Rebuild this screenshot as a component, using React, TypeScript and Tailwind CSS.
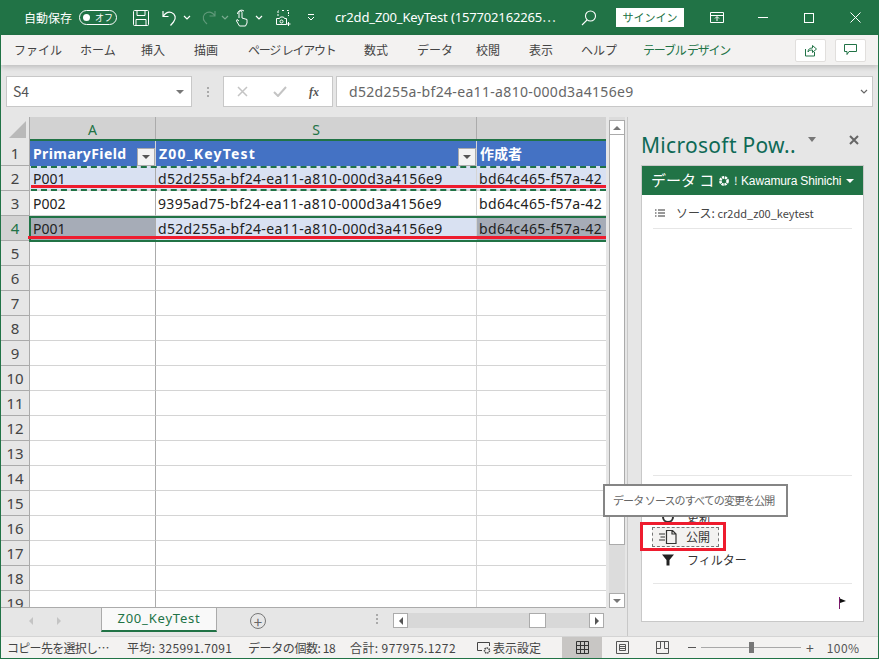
import type { ReactNode } from 'react';

const GUID = 'd52d255a-bf24-ea11-a810-000d3a4156e9';
const CREATOR = 'bd64c465-f57a-42';
const RULE_ROWS = [5, 6, 7, 8, 9, 10, 11, 12, 13, 14, 15, 16, 17, 18, 19];

const menus = [
  { label: 'ファイル', w: 'w-[79px] pl-[13px]' },
  { label: 'ホーム', w: 'w-[61px]' },
  { label: '挿入', w: 'w-[53px]' },
  { label: '描画', w: 'w-[54px]' },
  { label: 'ページ レイアウト', w: 'w-[116px] tracking-[-1.2px]' },
  { label: '数式', w: 'w-[53px]' },
  { label: 'データ', w: 'w-[59px]' },
  { label: '校閲', w: 'w-[53px]' },
  { label: '表示', w: 'w-[52px]' },
  { label: 'ヘルプ', w: 'w-[62px]' },
];

function Chevron({ className = '' }: { className?: string }) {
  return (
    <svg className={className} width="8" height="5" viewBox="0 0 8 5" fill="none" stroke="currentColor" strokeWidth="1.2">
      <path d="M1 1l3 3 3-3" />
    </svg>
  );
}

function TitleBar() {
  return (
    <div className="h-[35px] shrink-0 bg-[#217346] text-white flex items-center text-[12px]">
      <span className="ml-[23px] w-[55px]">自動保存</span>
      <div className="w-[38px] h-[15px] rounded-full border border-white flex items-center justify-between px-[3px]">
        <span className="w-[7px] h-[7px] rounded-full bg-white" />
        <span className="text-[9px] leading-none">オフ</span>
      </div>
      <svg className="ml-[15px]" width="18" height="18" viewBox="0 0 18 18" fill="none" stroke="white" strokeWidth="1">
        <path d="M2.5 1.5h13a1 1 0 0 1 1 1v13a1 1 0 0 1-1 1h-13a1 1 0 0 1-1-1v-13a1 1 0 0 1 1-1zM5 1.5v5h8v-5M4 16.5v-6h10v6" />
      </svg>
      <svg className="ml-[12px]" width="16" height="18" viewBox="0 0 16 18" fill="none" stroke="white" strokeWidth="1.2">
        <path d="M1 2v5.5h5.500M1.500 7c2-3 5-4.500 8-3.500 4 1.500 5 6 2 9.500l-3 3.500" />
      </svg>
      <Chevron className="ml-[5px]" />
      <svg className="ml-[9px] opacity-40" width="16" height="17" viewBox="0 0 16 17" fill="none" stroke="#bcd2c6" strokeWidth="1.1">
        <path d="M15 2v5H9.5M15 7c-2-3-5-4.5-8-3.5-4 1.5-5 6-2 9.500l2 2" />
      </svg>
      <Chevron className="ml-[5px] opacity-40" />
      <svg className="ml-[6px]" width="14" height="18" viewBox="0 0 14 18" fill="none" stroke="white" strokeWidth="1">
        <path d="M4 9V3.5a1.5 1.5 0 0 1 3 0V9l5 1.5V14l-1.5 3h-6L1.5 12 2 10.5l2 1.500" />
        <path d="M2.5 5a4 4 0 0 1 6.500-3" />
      </svg>
      <Chevron className="ml-[6px]" />
      <svg className="ml-[12px]" width="16" height="18" viewBox="0 0 16 18" fill="none" stroke="white" strokeWidth="1">
        <path d="M3 7V1.500h1M7 1.500h2M12 1.500h1.500V7" strokeDasharray="2 1" />
        <path d="M1.500 9.500h3l1-1.500h3l1 1.500h2v6h-10zM13.500 13v4M11.500 15h4" />
        <circle cx="6.500" cy="12.500" r="1.500" />
      </svg>
      <svg className="ml-[16px]" width="8" height="7" viewBox="0 0 8 7" fill="none" stroke="white" strokeWidth="1">
        <path d="M1 .5h6M1 3l3 3 3-3" />
      </svg>
      <span className="ml-[20px] w-[222px] text-[13px] tracking-[-0.15px] font-['Noto_Sans','Noto_Sans_CJK_JP',sans-serif] whitespace-nowrap">
        cr2dd_Z00_KeyTest (157702162265⋯
      </span>
      <svg className="ml-[24px]" width="16" height="16" viewBox="0 0 16 16" fill="none" stroke="white" strokeWidth="1.1">
        <circle cx="9.5" cy="6" r="5" />
        <path d="M6 10l-5 5" />
      </svg>
      <div className="ml-[19px] w-[68px] h-[19px] bg-white text-[#217346] text-[11px] flex items-center justify-center">サインイン</div>
      <svg className="ml-[26px]" width="14" height="12" viewBox="0 0 14 12" fill="none" stroke="white" strokeWidth="1">
        <path d="M.5.5h13v10h-13zM.5 3.5h13M7 9V5M5 6.5l2-2 2 2" />
      </svg>
      <span className="ml-[34px] w-[10px] h-px bg-white" />
      <span className="ml-[36px] w-[10px] h-[10px] border border-white" />
      <svg className="ml-[36px]" width="11" height="11" viewBox="0 0 11 11" stroke="white" strokeWidth="1">
        <path d="M.5.5l10 10M10.5.5l-10 10" />
      </svg>
    </div>
  );
}

function RibbonTabs() {
  return (
    <div className="h-[30px] shrink-0 bg-[#f3f2f1] flex items-center text-[12px] text-[#444] shadow-[0_2px_5px_rgba(0,0,0,0.18)] relative z-10">
      {menus.map((m) => (
        <span key={m.label} className={m.w + ' whitespace-nowrap'}>{m.label}</span>
      ))}
      <span className="text-[#217346] w-[152px] tracking-[-1.2px] whitespace-nowrap">テーブル デザイン</span>
      <button className="w-[31px] h-[23px] bg-white border border-[#e1dfdd] rounded-[2px] flex items-center justify-center">
        <svg width="13" height="13" viewBox="0 0 13 13" fill="none" stroke="#217346" strokeWidth="1">
          <path d="M1.5 5v7h9V8M4 8c0-3 2-4 4.5-4V1.5l4 3.5-4 3.500V6C6 6 5 6.500 4 8z" />
        </svg>
      </button>
      <button className="ml-[9px] w-[31px] h-[23px] bg-white border border-[#e1dfdd] rounded-[2px] flex items-center justify-center">
        <svg width="13" height="12" viewBox="0 0 13 12" fill="none" stroke="#217346" strokeWidth="1">
          <path d="M.5.5h12v7H5l-2 3v-3H.5z" />
        </svg>
      </button>
    </div>
  );
}

function FormulaBar() {
  return (
    <div className="h-[52px] shrink-0 bg-[#e6e6e6] flex items-start pt-[11px] pl-[5px]">
      <div className="w-[186px] h-[31px] bg-white border border-[#c8c8c8] flex items-center justify-between pl-[6px] pr-[7px] text-[14px] text-[#555]">
        S4
        <span className="w-0 h-0 border-x-[4px] border-x-transparent border-t-[4px] border-t-[#777]" />
      </div>
      <div className="w-[31px] h-[31px] flex flex-col items-center justify-center gap-[2px]">
        <span className="w-[2px] h-[2px] bg-[#aaa]" />
        <span className="w-[2px] h-[2px] bg-[#aaa]" />
        <span className="w-[2px] h-[2px] bg-[#aaa]" />
      </div>
      <div className="w-[110px] h-[31px] bg-white border border-[#c8c8c8] flex items-center">
        <svg className="ml-[13px]" width="11" height="11" viewBox="0 0 11 11" stroke="#c4c4c4" strokeWidth="1.5">
          <path d="M1 1l9 9M10 1l-9 9" />
        </svg>
        <svg className="ml-[25px]" width="14" height="11" viewBox="0 0 14 11" fill="none" stroke="#c4c4c4" strokeWidth="2">
          <path d="M1 6l4 4 8-9" />
        </svg>
        <span className="ml-[22px] text-[12px] italic font-semibold text-[#555] font-['Liberation_Serif',serif]">fx</span>
      </div>
      <div className="ml-[3px] w-[537px] h-[31px] bg-white border border-[#c8c8c8] flex items-center justify-between pl-[12px] pr-[4px] text-[14px] text-[#666] tracking-[0.33px] font-['Noto_Sans',sans-serif]">
        {GUID}
        <Chevron className="text-[#666]" />
      </div>
    </div>
  );
}

function FilterButton() {
  return (
    <span className="absolute right-0 bottom-0 w-[18px] h-[18px] bg-[#f3f3f3] border border-[#ababab] flex items-center justify-center">
      <span className="w-0 h-0 border-x-[4px] border-x-transparent border-t-[4px] border-t-[#555]" />
    </span>
  );
}

function Row({ n, cells, bg, sel }: { n: number; cells: [string, string, string]; bg: string; sel?: boolean }) {
  return (
    <div className={'flex h-[25px] ' + bg}>
      <div className={'w-[29px] shrink-0 border-b border-r border-[#ababab] flex items-center justify-center text-[15px] ' + (sel ? 'bg-[#d2d2d2] text-[#217346]' : 'bg-[#e6e6e6] text-[#444]')}>
        {n}
      </div>
      <div className={'w-[126px] shrink-0 pl-[3px] border-b border-r border-r-[#ababab] border-b-[#d4d4d4] flex items-center overflow-hidden ' + (sel ? 'bg-[#a6acb7]' : '')}>{cells[0]}</div>
      <div className="w-[321px] shrink-0 pl-[2px] border-b border-r border-[#d4d4d4] flex items-center overflow-hidden tracking-[0.33px]">{cells[1]}</div>
      <div className={'w-[129px] shrink-0 pl-[2px] border-b border-[#d4d4d4] flex items-center overflow-hidden whitespace-nowrap tracking-[0.33px] ' + (sel ? 'bg-[#a6acb7]' : '')}>{cells[2]}</div>
    </div>
  );
}

function Sheet() {
  return (
    <div className="relative w-[605px] h-[491px] overflow-hidden bg-white border-b border-[#ababab] text-[14px] text-[#222] font-['Noto_Sans','Noto_Sans_CJK_JP',sans-serif]">
      {/* Column headers */}
      <div className="flex h-[24px] bg-[#d2d2d2] text-[14px] text-[#217346]">
        <div className="w-[29px] bg-[#e6e6e6] border-r border-[#ababab] flex items-end justify-end p-[3px]">
          <span className="w-0 h-0 border-l-[17px] border-l-transparent border-b-[17px] border-b-[#b9b9b9]" />
        </div>
        <div className="w-[126px] border-r border-[#ababab] flex items-center justify-center">A</div>
        <div className="w-[321px] border-r border-[#ababab] flex items-center justify-center">S</div>
        <div className="w-[129px]" />
      </div>
      <div className="h-[2px] -mt-[2px] ml-[29px] bg-[#217346] relative" />
      {/* Table header */}
      <div className="flex h-[25px] bg-[#4472c4] text-white font-bold">
        <div className="w-[29px] bg-[#e6e6e6] border-r border-b border-[#ababab] text-[#444] font-normal text-[15px] flex items-center justify-center">1</div>
        <div className="relative w-[126px] pl-[3px] flex items-center border-r border-[#d4d4d4] tracking-[0.4px]">PrimaryField<FilterButton /></div>
        <div className="relative w-[321px] pl-[3px] flex items-center border-r border-[#d4d4d4] tracking-[1.2px]">Z00_KeyTest<FilterButton /></div>
        <div className="w-[129px] pl-[3px] flex items-center font-['Noto_Sans_CJK_JP',sans-serif]">作成者</div>
      </div>
      <Row n={2} bg="bg-[#d9e1f2]" cells={['P001', GUID, CREATOR]} />
      <Row n={3} bg="bg-white" cells={['P002', '9395ad75-bf24-ea11-a810-000d3a4156e9', CREATOR]} />
      <Row n={4} bg="bg-[#d9e1f2]" sel cells={['P001', GUID, CREATOR]} />
      {RULE_ROWS.map((n) => (
        <Row key={n} n={n} bg="bg-white" cells={['', '', '']} />
      ))}

      {/* Copy marquee, selection and the red annotations lie over the cells */}
      <div className="absolute left-[30px] top-[49px] w-[575px] h-[25px] border-y-2 border-dashed border-[#217346]" />
      <div className="absolute left-[28px] top-[99px] w-[577px] h-[26px] border-y-2 border-l-2 border-[#217346]" />
      <div className="absolute left-[30px] top-[68px] w-[577px] h-[3px] bg-[#ee1c2e]" />
      <div className="absolute left-[27px] top-[119px] w-[582px] h-[3px] bg-[#ee1c2e]" />
    </div>
  );
}

function VScroll() {
  return (
    <div className="ml-[3px] w-[16px] h-[491px] bg-[#dcdcdc] flex flex-col">
      <div className="mt-[3px] h-[15px] bg-white border border-[#ababab] flex items-center justify-center">
        <span className="w-0 h-0 border-x-[4px] border-x-transparent border-b-[4px] border-b-[#777]" />
      </div>
      <div className="h-[410px] bg-white border-x border-b border-[#ababab]" />
      <div className="flex-1" />
      <div className="h-[15px] bg-white border border-[#ababab] flex items-center justify-center">
        <span className="w-0 h-0 border-x-[4px] border-x-transparent border-t-[4px] border-t-[#777]" />
      </div>
    </div>
  );
}

function SheetTabs() {
  return (
    <div className="flex items-start h-[27px] text-[#bbb]">
      <div className="w-[100px] h-[25px] flex items-center">
        <span className="ml-[28px] w-0 h-0 border-y-[4px] border-y-transparent border-r-[4px] border-r-[#c4c4c4]" />
        <span className="ml-[24px] w-0 h-0 border-y-[4px] border-y-transparent border-l-[4px] border-l-[#c4c4c4]" />
      </div>
      <div className="w-[116px] h-[25px] -mt-px bg-[#f9f9f9] border-x border-[#ababab] border-b-[2px] border-b-[#217346] flex items-center justify-center text-[13px] text-[#217346] tracking-[0.8px] font-['Noto_Sans',sans-serif]">
        Z00_KeyTest
      </div>
      <div className="ml-[33px] mt-[5px] w-[16px] h-[16px] rounded-full border border-[#777] flex items-center justify-center text-[#666] text-[15px] leading-none">+</div>
      <div className="ml-[110px] mt-[6px] flex flex-col gap-[2px]">
        <span className="w-[2px] h-[2px] bg-[#aaa]" />
        <span className="w-[2px] h-[2px] bg-[#aaa]" />
        <span className="w-[2px] h-[2px] bg-[#aaa]" />
      </div>
      <div className="ml-[15px] mt-[5px] w-[211px] h-[15px] bg-[#d8d8d8] flex items-center">
        <div className="w-[15px] h-[15px] bg-white border border-[#ababab] flex items-center justify-center">
          <span className="w-0 h-0 border-y-[4px] border-y-transparent border-r-[4px] border-r-[#555]" />
        </div>
        <div className="ml-[121px] w-[17px] h-[15px] bg-white border border-[#ababab]" />
        <div className="ml-[43px] w-[15px] h-[15px] bg-white border border-[#ababab] flex items-center justify-center">
          <span className="w-0 h-0 border-y-[4px] border-y-transparent border-l-[4px] border-l-[#555]" />
        </div>
      </div>
    </div>
  );
}

function PaneAction({ icon, label, className = '' }: { icon: ReactNode; label: string; className?: string }) {
  return (
    <div className={'flex items-center text-[12px] text-[#333] ' + className}>
      <span className="w-[30px] flex justify-center">{icon}</span>
      <span className="ml-[4px]">{label}</span>
    </div>
  );
}

function Pane() {
  return (
    <div className="relative flex-1 flex flex-col pl-[13px] border-l border-[#c8c8c8] ml-[2px] h-[519px] bg-[#e6e6e6]">
      <div className="h-[48px] flex items-center text-[#0f6a56]">
        <span className="text-[21px] leading-none font-['Noto_Sans',sans-serif] mt-[8px] whitespace-nowrap tracking-[0.3px]">Microsoft Pow..</span>
        <span className="ml-[12px] -mt-[4px] w-0 h-0 border-x-[4px] border-x-transparent border-t-[5px] border-t-[#777]" />
        <svg className="ml-[33px] -mt-[3px]" width="10" height="10" viewBox="0 0 10 10" stroke="#666" strokeWidth="2">
          <path d="M1 1l8 8M9 1l-8 8" />
        </svg>
      </div>
      <div className="w-[223px] h-[457px] bg-white border border-[#c8c8c8] flex flex-col">
        <div className="h-[29px] bg-[#217346] text-white flex items-center pl-[9px] whitespace-nowrap overflow-hidden">
          <span className="text-[15px] w-[67px]">データ コ</span>
          <svg width="12" height="12" viewBox="0 0 12 12" fill="none" stroke="white" strokeWidth="2.6" strokeDasharray="2.2 .7">
            <circle cx="6" cy="6" r="3.6" />
          </svg>
          <span className="ml-[4px] text-[11px] w-[5px]">!</span>
          <span className="ml-[2px] text-[12px] tracking-[-0.15px] font-['Liberation_Sans',sans-serif]">Kawamura Shinichi</span>
          <span className="ml-[5px] w-0 h-0 border-x-[4px] border-x-transparent border-t-[4px] border-t-white" />
        </div>
        <div className="mx-[11px] h-[34px] pt-[3px] border-b border-[#e6e6e6] flex items-center text-[12px] text-[#444]">
          <svg className="ml-[2px]" width="10" height="8" viewBox="0 0 10 8" stroke="#333" strokeWidth="1">
            <path d="M0 1h1.5M3 1h7M0 4h1.5M3 4h7M0 7h1.5M3 7h7" />
          </svg>
          <span className="ml-[11px] whitespace-nowrap">ソース: <span className="text-[11px]">cr2dd_z00_keytest</span></span>
        </div>
        <div className="flex-1" />
        <div className="mx-[11px] h-[108px] border-t border-[#e6e6e6] relative">
          <PaneAction
            className="h-[22px] mt-[30px]"
            label="更新"
            icon={<span className="w-[12px] h-[12px] rounded-full border-2 border-[#333]" />}
          />
          <div className="h-[21px] -mt-px -ml-px flex">
            <div className="w-[67px] h-[20px] bg-[#f3f2f1] border border-dashed border-[#777] flex items-center text-[12px] text-[#333]">
              <svg className="ml-[6px]" width="18" height="14" viewBox="0 0 18 14" fill="none" stroke="#333" strokeWidth="1.2">
                <path d="M0 4h6M1.500 7h4.500M0 10h6M7.500 .5h6l3.500 3.500v9.500h-9.500zM13 .5V4h4" />
              </svg>
              <span className="ml-[9px]">公開</span>
            </div>
          </div>
          <PaneAction
            className="h-[24px]"
            label="フィルター"
            icon={
              <svg width="12" height="12" viewBox="0 0 12 12" fill="#222">
                <path d="M0 .5h12L7.5 6v5.500h-3V6z" />
              </svg>
            }
          />
        </div>
        <div className="mx-[11px] h-[38px] border-t border-[#e6e6e6] flex items-center justify-end pr-[3px]">
          <svg width="10" height="12" viewBox="0 0 10 12">
            <path d="M.5 0v12" stroke="#7a1a6a" strokeWidth="1" />
            <path d="M1 1.500l6 2.500-6 2z" fill="#111" />
          </svg>
        </div>
      </div>

      {/* Tooltip and the red annotation box */}
      <div className="absolute left-[-25px] top-[367px] w-[185px] h-[33px] bg-white border-2 border-[#858585] flex items-center pl-[8px] text-[11px] tracking-[-0.9px] text-[#666] whitespace-nowrap">
        データ ソースのすべての変更を公開
      </div>
      <div className="absolute left-[12px] top-[405px] w-[86px] h-[29px] border-[3px] border-[#ee1c2e]" />
    </div>
  );
}

function StatusBar() {
  return (
    <div className="h-[22px] shrink-0 bg-[#f3f2f1] border-t border-[#d4d4d4] flex items-center text-[12px] text-[#444] whitespace-nowrap">
      <span className="ml-[6px] w-[120px] tracking-[-0.7px]">コピー先を選択し⋯</span>
      <span className="w-[121px] tracking-[0.35px]">平均: 325991.7091</span>
      <span className="w-[102px] tracking-[-0.4px]">データの個数: 18</span>
      <span className="w-[127px] tracking-[0.4px]">合計: 977975.1272</span>
      <svg width="15" height="14" viewBox="0 0 15 14" fill="none" stroke="#444" strokeWidth="1">
        <path d="M5 9.5H.5v-8h12V5" />
        <circle cx="10" cy="9.5" r="2.5" strokeDasharray="1.5 .7" strokeWidth="1.5" />
      </svg>
      <span className="ml-[1px] w-[69px]">表示設定</span>
      <div className="w-[40px] h-[21px] bg-[#c8c6c4] flex items-center justify-center">
        <svg width="13" height="13" viewBox="0 0 13 13" fill="none" stroke="#333" strokeWidth="1">
          <path d="M.5.5h12v12H.5zM.5 4.5h12M.5 8.5h12M4.5.5v12M8.5.5v12" />
        </svg>
      </div>
      <div className="w-[40px] flex justify-center">
        <svg width="13" height="13" viewBox="0 0 13 13" fill="none" stroke="#555" strokeWidth="1">
          <path d="M.5.5h12v12H.5zM3.5 3.5h6v6h-6zM3.5 5.5h6M3.5 7.5h6" />
        </svg>
      </div>
      <div className="w-[40px] flex justify-center">
        <svg width="13" height="13" viewBox="0 0 13 13" fill="none" stroke="#555" strokeWidth="1">
          <path d="M.5.5h12v12H.5zM.5 7.5h4v-7M8.5.5v7h4" />
        </svg>
      </div>
      <span className="ml-[6px] w-[8px] h-px bg-[#555]" />
      <div className="ml-[5px] w-[100px] h-px bg-[#a8a8a8] flex items-center">
        <span className="ml-[48px] w-[5px] h-[11px] bg-[#777]" />
      </div>
      <span className="ml-[5px] text-[14px] leading-none text-[#555]">+</span>
      <span className="ml-[13px] text-[#555] tracking-[0.4px]">100%</span>
    </div>
  );
}

export default function App() {
  return (
    <div className="w-[879px] h-[659px] overflow-hidden flex flex-col bg-[#e6e6e6] border-x border-b border-[#217346] font-['Noto_Sans_CJK_JP','Noto_Sans',sans-serif]">
      <TitleBar />
      <RibbonTabs />
      <FormulaBar />
      <div className="flex flex-1 min-h-0">
        <div className="w-[624px] shrink-0">
          <div className="flex">
            <Sheet />
            <VScroll />
          </div>
          <SheetTabs />
        </div>
        <Pane />
      </div>
      <StatusBar />
    </div>
  );
}
